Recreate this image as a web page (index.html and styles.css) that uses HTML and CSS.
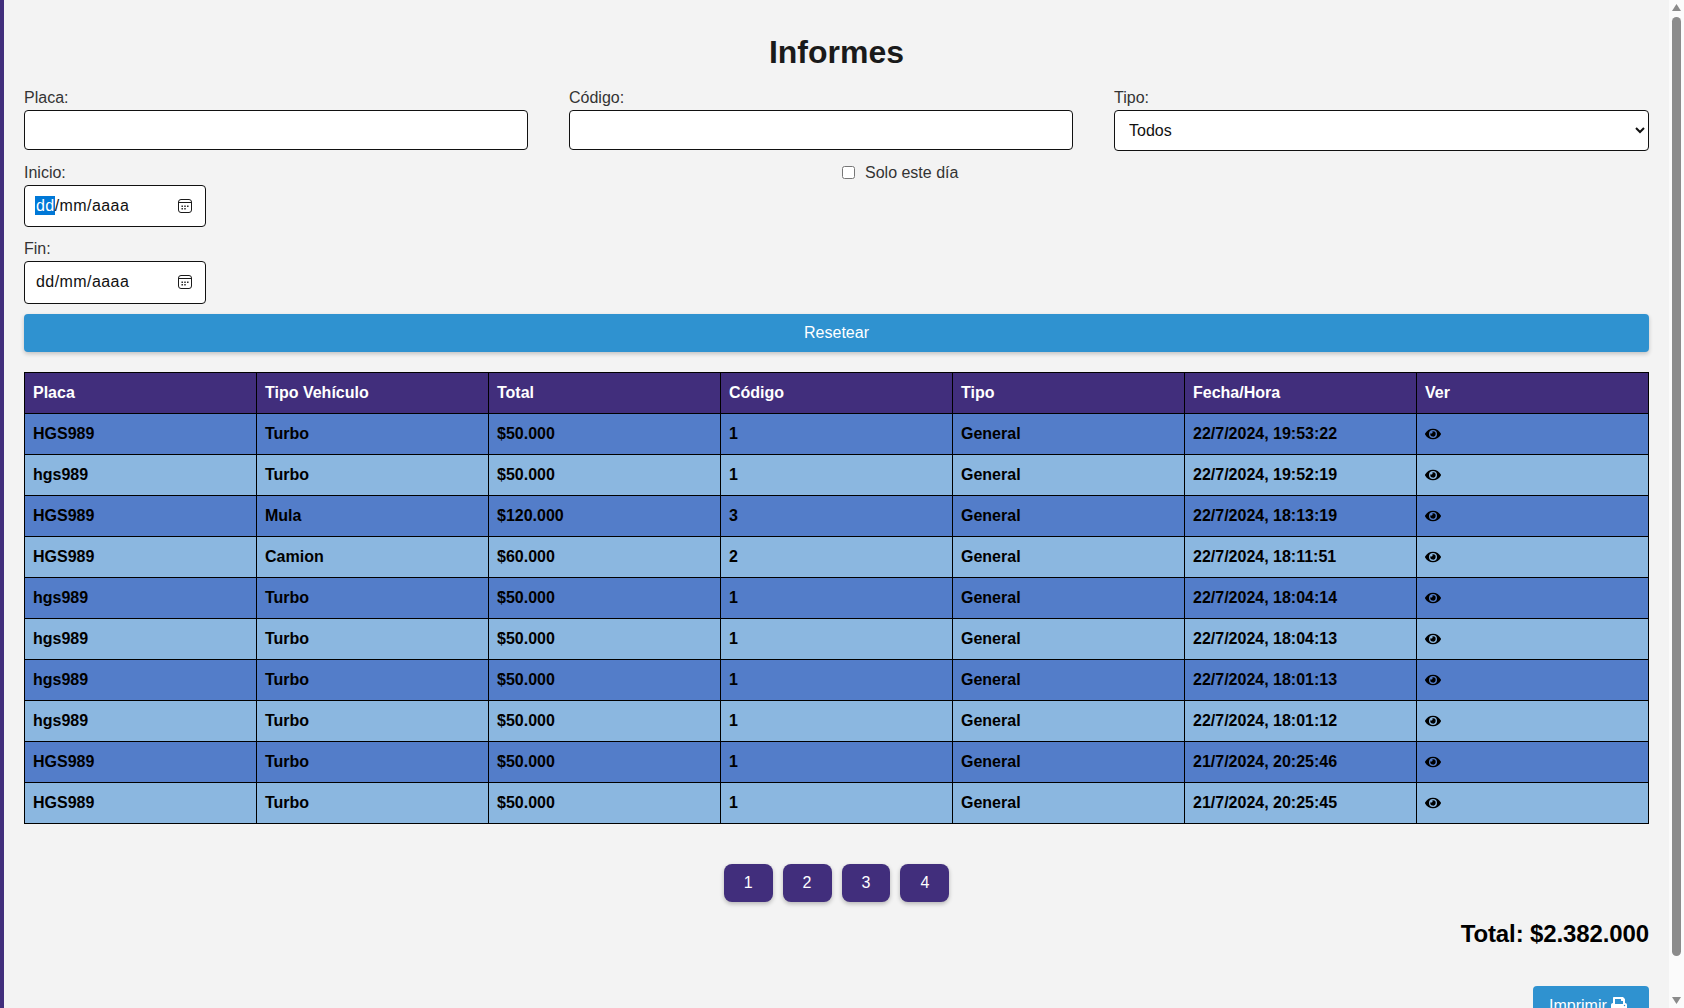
FILE: index.html
```html
<!DOCTYPE html>
<html lang="es">
<head>
<meta charset="utf-8">
<title>Informes</title>
<link rel="stylesheet" href="styles.css">
</head>
<body>
<div class="app">
  <div class="sidebar"></div>
  <main class="main">
    <h1 class="title">Informes</h1>
    <div class="filters">
      <div class="field"><label class="label">Placa:</label><input class="text-input" type="text"></div>
      <div class="field"><label class="label">Código:</label><input class="text-input" type="text"></div>
      <div class="field"><label class="label">Tipo:</label><select class="select"><option>Todos</option></select></div>
    </div>
    <div class="dates">
      <div class="date-col">
        <div class="field"><label class="label">Inicio:</label>
          <div class="date-input"><span class="date-text"><span class="selected">dd</span>/mm/aaaa</span>
            <svg class="cal" viewBox="0 0 14 14"><rect x=".5" y=".5" width="13" height="13" rx="2.5" fill="none" stroke="#1a1a1a"/><path d="M1 3.5h12" stroke="#1a1a1a"/><path d="M3.5 6.5h1.4v1.4H3.500zM6.300 6.500h1.400v1.400H6.300zM9.100 6.500h1.400v1.400H9.100zM3.500 9h1.400v1.400H3.500zM6.300 9h1.400v1.400H6.300z" fill="#1a1a1a"/></svg>
          </div>
        </div>
        <div class="field field-fin"><label class="label">Fin:</label>
          <div class="date-input date-input-fin"><span class="date-text">dd/mm/aaaa</span>
            <svg class="cal" viewBox="0 0 14 14"><rect x=".5" y=".5" width="13" height="13" rx="2.5" fill="none" stroke="#1a1a1a"/><path d="M1 3.5h12" stroke="#1a1a1a"/><path d="M3.5 6.5h1.4v1.4H3.500zM6.300 6.500h1.400v1.400H6.300zM9.100 6.500h1.400v1.400H9.100zM3.500 9h1.400v1.400H3.500zM6.300 9h1.400v1.400H6.300z" fill="#1a1a1a"/></svg>
          </div>
        </div>
      </div>
      <label class="check"><input class="checkbox" type="checkbox"><span>Solo este día</span></label>
    </div>
    <button class="reset">Resetear</button>
    <table class="table">
      <thead><tr><th>Placa</th><th>Tipo Vehículo</th><th>Total</th><th>Código</th><th>Tipo</th><th>Fecha/Hora</th><th>Ver</th></tr></thead>
      <tbody id="rows">
        <tr><td>HGS989</td><td>Turbo</td><td>$50.000</td><td>1</td><td>General</td><td>22/7/2024, 19:53:22</td><td><svg class="eye" viewBox="0 0 576 512"><use href="#eye"/></svg></td></tr>
        <tr><td>hgs989</td><td>Turbo</td><td>$50.000</td><td>1</td><td>General</td><td>22/7/2024, 19:52:19</td><td><svg class="eye" viewBox="0 0 576 512"><use href="#eye"/></svg></td></tr>
        <tr><td>HGS989</td><td>Mula</td><td>$120.000</td><td>3</td><td>General</td><td>22/7/2024, 18:13:19</td><td><svg class="eye" viewBox="0 0 576 512"><use href="#eye"/></svg></td></tr>
        <tr><td>HGS989</td><td>Camion</td><td>$60.000</td><td>2</td><td>General</td><td>22/7/2024, 18:11:51</td><td><svg class="eye" viewBox="0 0 576 512"><use href="#eye"/></svg></td></tr>
        <tr><td>hgs989</td><td>Turbo</td><td>$50.000</td><td>1</td><td>General</td><td>22/7/2024, 18:04:14</td><td><svg class="eye" viewBox="0 0 576 512"><use href="#eye"/></svg></td></tr>
        <tr><td>hgs989</td><td>Turbo</td><td>$50.000</td><td>1</td><td>General</td><td>22/7/2024, 18:04:13</td><td><svg class="eye" viewBox="0 0 576 512"><use href="#eye"/></svg></td></tr>
        <tr><td>hgs989</td><td>Turbo</td><td>$50.000</td><td>1</td><td>General</td><td>22/7/2024, 18:01:13</td><td><svg class="eye" viewBox="0 0 576 512"><use href="#eye"/></svg></td></tr>
        <tr><td>hgs989</td><td>Turbo</td><td>$50.000</td><td>1</td><td>General</td><td>22/7/2024, 18:01:12</td><td><svg class="eye" viewBox="0 0 576 512"><use href="#eye"/></svg></td></tr>
        <tr><td>HGS989</td><td>Turbo</td><td>$50.000</td><td>1</td><td>General</td><td>21/7/2024, 20:25:46</td><td><svg class="eye" viewBox="0 0 576 512"><use href="#eye"/></svg></td></tr>
        <tr><td>HGS989</td><td>Turbo</td><td>$50.000</td><td>1</td><td>General</td><td>21/7/2024, 20:25:45</td><td><svg class="eye" viewBox="0 0 576 512"><use href="#eye"/></svg></td></tr>
      </tbody>
    </table>
    <div class="pagination"><button class="page">1</button><button class="page">2</button><button class="page">3</button><button class="page">4</button></div>
    <div class="total">Total: $2.382.000</div>
    <div class="print-row"><button class="print">Imprimir <svg class="print-icon" viewBox="0 0 512 512"><path fill="currentColor" d="M448 192V77.25c0-8.49-3.37-16.62-9.37-22.63L393.37 9.37c-6-6-14.14-9.37-22.63-9.37H96C78.33 0 64 14.33 64 32v160c-35.35 0-64 28.65-64 64v112c0 8.84 7.16 16 16 16h48v96c0 17.67 14.33 32 32 32h320c17.67 0 32-14.33 32-32v-96h48c8.84 0 16-7.16 16-16V256c0-35.35-28.65-64-64-64zm-64 256H128v-96h256v96zm0-224H128V64h192v48c0 8.84 7.16 16 16 16h48v96zm48 72c-13.25 0-24-10.75-24-24 0-13.26 10.75-24 24-24s24 10.74 24 24c0 13.25-10.75 24-24 24z"/></svg></button></div>
  </main>
  <div class="scrollbar">
    <svg class="arrow" viewBox="0 0 9 7"><path d="M4.500 0 9 7H0z" fill="#8b8b8b"/></svg>
    <div class="track"><div class="thumb"></div></div>
    <svg class="arrow" viewBox="0 0 9 7"><path d="M0 0h9L4.500 7z" fill="#8b8b8b"/></svg>
  </div>
</div>
<svg class="defs" width="0" height="0"><defs><path id="eye" fill="currentColor" d="M572.52 241.4C518.29 135.59 410.93 64 288 64S57.68 135.64 3.48 241.41a32.35 32.35 0 0 0 0 29.19C57.71 376.41 165.07 448 288 448s230.32-71.64 284.52-177.41a32.35 32.35 0 0 0 0-29.19zM288 400a144 144 0 1 1 144-144 143.93 143.93 0 0 1-144 144zm0-240a95.31 95.31 0 0 0-25.31 3.79 47.85 47.85 0 0 1-66.9 66.9A95.78 95.78 0 1 0 288 160z"/></defs></svg>
</body>
</html>
```
FILE: styles.css
```css
* { box-sizing: border-box; }
html, body { margin: 0; height: 100%; overflow: hidden; }
body { font-family: "Liberation Sans", Arial, sans-serif; font-size: 16px; color: #111; background: #f3f3f3; }
.defs { position: absolute; }
.app { display: flex; height: 1008px; overflow: hidden; }
.sidebar { width: 4px; flex: none; background: #412e7c; }
.main { flex: 1; min-width: 0; padding: 0 20px; overflow: hidden; }
.title { margin: 0; padding-top: 34px; height: 90px; font-size: 32px; line-height: 37px; text-align: center; color: #1a1a1a; }
.filters { display: grid; grid-template-columns: repeat(3, 1fr); gap: 10px; }
.field { display: flex; flex-direction: column; align-items: flex-start; }
.label { height: 20px; line-height: 16px; color: #333; }
.text-input { width: 504px; height: 40px; border: 1px solid #111; border-radius: 4px; background: #fff; }
.select { width: 100%; height: 41px; padding: 0 10px; border: 1px solid #111; border-radius: 4px; background: #fff; font: 16px "Liberation Sans", Arial, sans-serif; color: #111; }
.dates { display: flex; margin-top: 14px; }
.date-col { width: 818px; flex: none; }
.field-fin { margin-top: 14px; }
.date-input { display: flex; align-items: center; justify-content: space-between; width: 182px; height: 42px; padding: 0 13px 0 10px; border: 1px solid #111; border-radius: 4px; background: #fff; color: #111; }
.date-input-fin { height: 43px; padding-left: 11px; padding-bottom: 2px; }
.date-text { line-height: 20px; letter-spacing: .43px; }
.selected { background: #0078d7; color: #fff; display: inline-block; line-height: 19px; padding: 0 0 0 1px; }
.cal { width: 14px; height: 14px; }
.check { display: flex; align-items: flex-start; height: 20px; line-height: 16px; color: #333; }
.checkbox { width: 13px; height: 13px; margin: 1px 10px 0 0; }
.reset { display: block; width: 100%; height: 38px; margin-top: 10px; padding: 0; border: 0; border-radius: 4px; background: #2f92d0; color: #fff; font: 16px "Liberation Sans", Arial, sans-serif; box-shadow: 0 2px 4px rgba(0,0,0,.2); }
.table { width: 100%; margin-top: 20px; border-collapse: collapse; table-layout: fixed; font-weight: 700; }
.table th, .table td { height: 41px; padding: 0 8px; border: 1px solid #000; text-align: left; font-weight: 700; color: #000; }
.table th { background: #412e7c; color: #fff; }
.table tbody tr:nth-child(odd) td { background: #537dc9; }
.table tbody tr:nth-child(even) td { background: #8bb7e0; }
.eye { display: block; width: 16px; height: 16px; }
.pagination { display: flex; justify-content: center; gap: 10px; margin-top: 40px; }
.page { height: 38px; padding: 0 20px; border: 0; border-radius: 8px; background: #412e7c; color: #fff; font: 16px "Liberation Sans", Arial, sans-serif; box-shadow: 0 2px 4px rgba(0,0,0,.25); }
.total { margin-top: 18px; font-size: 24px; line-height: 28px; font-weight: 700; text-align: right; color: #000; letter-spacing: -.12px; }
.print-row { display: flex; justify-content: flex-end; margin-top: 38px; }
.print { display: block; width: 116px; height: 40px; padding: 0 0 0 16px; border: 0; border-radius: 4px; background: #2f92d0; color: #fff; font: 16px "Liberation Sans", Arial, sans-serif; flex: none; text-align: left; white-space: nowrap; }
.print-icon { width: 16px; height: 16px; vertical-align: -2px; }
.scrollbar { width: 15px; flex: none; display: flex; flex-direction: column; align-items: center; background: #fbfbfb; }
.arrow { width: 9px; height: 7px; margin: 4px 0; flex: none; }
.track { flex: 1; width: 100%; padding: 2px 3px 0; }
.thumb { height: 939px; border-radius: 5px; background: #8b8b8b; }
```
